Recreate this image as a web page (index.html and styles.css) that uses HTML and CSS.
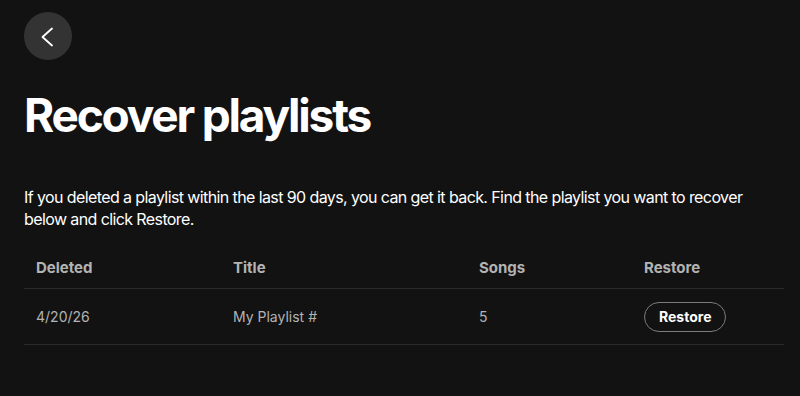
FILE: index.html
```html
<!DOCTYPE html>
<html>
<head>
<meta charset="utf-8">
<link rel="stylesheet" href="styles.css">
</head>
<body>
<main class="page">
  <button class="back" aria-label="Back">
    <svg width="24" height="24" viewBox="0 0 24 24"><path d="M16 4.5 6.5 13 16 21.5" fill="none" stroke="#fff" stroke-width="1.8" stroke-linecap="round" stroke-linejoin="round"/></svg>
  </button>
  <h1 class="title">Recover playlists</h1>
  <p class="intro">If you deleted a playlist within the last 90 days, you can get it back. Find the playlist you want to recover below and click Restore.</p>
  <div class="table">
    <div class="row head">
      <div class="cell">Deleted</div>
      <div class="cell">Title</div>
      <div class="cell">Songs</div>
      <div class="cell">Restore</div>
    </div>
    <div class="row body">
      <div class="cell">4/20/26</div>
      <div class="cell">My Playlist #</div>
      <div class="cell">5</div>
      <div class="cell"><button class="restore">Restore</button></div>
    </div>
  </div>
</main>
</body>
</html>
```

FILE: styles.css
```css
html, body {
  margin: 0;
  background: #121212;
}
body {
  font-family: Inter, "Noto Sans", sans-serif;
  color: #fff;
}
.page {
  padding: 12px 16px 0 24px;
}
.back {
  width: 48px;
  height: 48px;
  border-radius: 50%;
  border: none;
  background: #333;
  display: flex;
  align-items: center;
  justify-content: center;
  padding: 0;
}
.title {
  margin: 27px 0 0;
  font-size: 46px;
  line-height: 56px;
  font-weight: 700;
  letter-spacing: -2.2px;
}
.intro {
  margin: 43px 0 0;
  font-size: 16px;
  line-height: 22px;
  letter-spacing: -0.6px;
  max-width: 740px;
}
.table {
  margin-top: 17px;
}
.row {
  display: grid;
  grid-template-columns: 197px 246px 165px 1fr;
  align-items: center;
  border-bottom: 1px solid #2a2a2a;
}
.head {
  height: 41px;
  font-size: 15px;
  font-weight: 700;
  color: #b3b3b3;
}
.body {
  height: 55px;
  font-size: 14px;
  color: #b3b3b3;
}
.cell {
  padding-left: 12px;
}
.restore {
  font-family: inherit;
  font-size: 14px;
  font-weight: 700;
  color: #fff;
  background: transparent;
  border: 1px solid #7c7c7c;
  border-radius: 999px;
  height: 30px;
  padding: 0 14px;
}
```
